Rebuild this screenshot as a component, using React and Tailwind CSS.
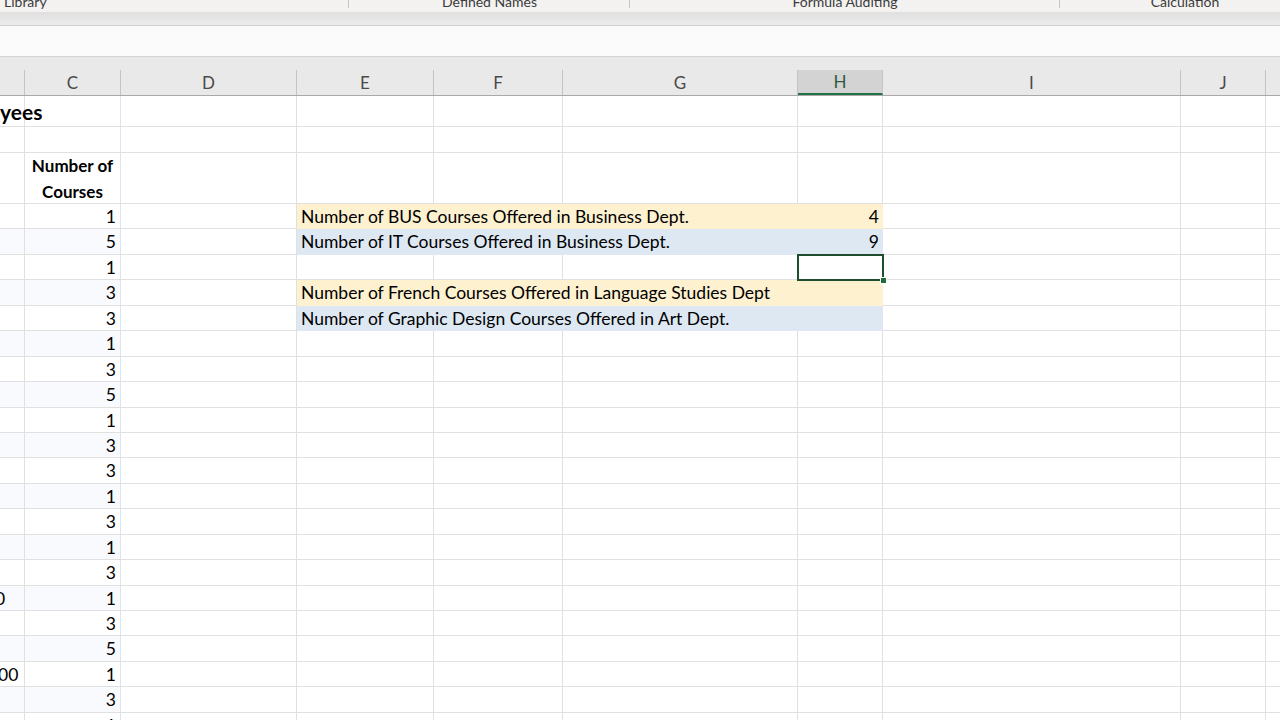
import React from "react";

const FONT = { fontFamily: "Lato, 'Open Sans', 'Liberation Sans', sans-serif" };

const cols = [
  { key: "B", w: 25 },
  { key: "C", w: 96 },
  { key: "D", w: 176 },
  { key: "E", w: 137 },
  { key: "F", w: 129 },
  { key: "G", w: 235 },
  { key: "H", w: 85 },
  { key: "I", w: 298 },
  { key: "J", w: 85 },
  { key: "K", w: 40 },
];

const values = [1, 5, 1, 3, 3, 1, 3, 5, 1, 3, 3, 1, 3, 1, 3, 1, 3, 5, 1, 3, 1];

const bands = {
  0: { bg: "bg-[#fdf1d0]", text: "Number of BUS Courses Offered in Business Dept.", num: "4" },
  1: { bg: "bg-[#dde8f3]", text: "Number of IT Courses Offered in Business Dept.", num: "9" },
  3: { bg: "bg-[#fdf1d0]", text: "Number of French Courses Offered in Language Studies Dept", num: "" },
  4: { bg: "bg-[#dde8f3]", text: "Number of Graphic Design Courses Offered in Art Dept.", num: "" },
};

const bText = { 15: { t: "0", ml: "ml-[-5px]" }, 18: { t: "00", ml: "ml-[-2px]" } };

function Cell({ w, className = "", children }) {
  return (
    <div
      className={"shrink-0 border-r border-b border-[#e0e0e0] " + className}
      style={{ width: w }}
    >
      {children}
    </div>
  );
}

function TopStrip() {
  const groups = [
    { w: 349, label: "Library", align: "justify-start pl-[4px]" },
    { w: 281, label: "Defined Names", align: "justify-center" },
    { w: 430, label: "Formula Auditing", align: "justify-center" },
    { w: 250, label: "Calculation", align: "justify-center" },
  ];
  return (
    <div className="h-[12px] bg-[#f3f2f1] flex overflow-hidden">
      {groups.map((g, i) => (
        <div
          key={i}
          className={"shrink-0 flex items-start h-full relative " + g.align}
          style={{ width: g.w }}
        >
          <span className="text-[14px] leading-[14px] text-[#3b3b3b] mt-[-5px] whitespace-nowrap">
            {g.label}
          </span>
          {i < 3 && (
            <div className="absolute right-0 top-0 h-[8px] w-px bg-[#c6c6c6]" />
          )}
        </div>
      ))}
    </div>
  );
}

function Header() {
  return (
    <div className="h-[39px] bg-[#e9e9e9] flex flex-col justify-end">
      <div className="flex h-[26px] border-b border-[#a9a9a9]">
        {cols.map((c) => {
          const sel = c.key === "H";
          return (
            <div
              key={c.key}
              className={
                "shrink-0 flex items-center justify-center text-[17px] border-r " +
                (sel
                  ? "bg-[#d3d3d3] text-[#2d5c40] border-[#c4c4c4] border-b-2 border-b-[#217346]"
                  : "text-[#4a4a4a] border-[#c4c4c4]")
              }
              style={{ width: c.w }}
            >
              {c.key === "B" || c.key === "K" ? "" : c.key}
            </div>
          );
        })}
      </div>
    </div>
  );
}

function DataRow({ i }) {
  const band = bands[i];
  const tint = i % 2 === 1 ? "bg-[#f8fafd]" : "bg-white";
  const b = bText[i];
  const selected = i === 2;
  return (
    <div className="flex h-[25.45px] text-[17.5px] leading-[24px] pt-0 text-black">
      <Cell w={25} className={tint + " overflow-hidden whitespace-nowrap pt-[1px]"}>
        {b && <span className={"block " + b.ml}>{b.t}</span>}
      </Cell>
      <Cell w={96} className={tint + " text-right pr-[4px] pt-[1px] border-r-[#dbe5f1]"}>
        {values[i]}
      </Cell>
      <Cell w={176} />
      {band ? (
        <div
          className={"shrink-0 flex justify-between pl-[4px] pr-[4px] pt-[1px] whitespace-nowrap " + band.bg}
          style={{ width: 586 }}
        >
          <span>{band.text}</span>
          <span>{band.num}</span>
        </div>
      ) : (
        <>
          <Cell w={137} />
          <Cell w={129} />
          <Cell w={235} />
          <Cell w={85} className="relative">
            {selected && (
              <div className="absolute left-[-1px] top-[-1px] w-[87px] h-[27px] border-2 border-[#1f4e2f]">
                <div className="absolute right-[-5px] bottom-[-5px] w-[7px] h-[7px] bg-[#1f6b3a] border border-white" />
              </div>
            )}
          </Cell>
        </>
      )}
      <Cell w={298} />
      <Cell w={85} />
      <Cell w={40} />
    </div>
  );
}

export default function App() {
  return (
    <div className="w-[1280px] h-[720px] overflow-hidden bg-white" style={FONT}>
      <TopStrip />
      <div className="h-[14px] bg-gradient-to-b from-[#e0e0e0] to-[#ebebeb] border-b border-[#cfcfcf]" />
      <div className="h-[31px] bg-[#fbfbfb] border-b border-[#d4d4d4]" />
      <Header />
      {/* Row 1 */}
      <div className="flex h-[31px] text-black">
        <Cell w={25} className="overflow-visible relative">
          <span className="absolute left-0 top-[4px] text-[21px] leading-[24px] font-bold whitespace-nowrap">yees</span>
        </Cell>
        <Cell w={96} className="border-r-[#dbe5f1]" />
        {cols.slice(2).map((c) => (
          <Cell key={c.key} w={c.w} />
        ))}
      </div>
      {/* Row 2 */}
      <div className="flex h-[26px]">
        <Cell w={25} />
        <Cell w={96} className="border-r-[#dbe5f1]" />
        {cols.slice(2).map((c) => (
          <Cell key={c.key} w={c.w} />
        ))}
      </div>
      {/* Row 3 */}
      <div className="flex h-[51px]">
        <Cell w={25} />
        <Cell w={96} className="border-r-[#dbe5f1] text-center font-bold text-[17px] leading-[26px] text-black whitespace-nowrap">
          <div>Number of</div>
          <div>Courses</div>
        </Cell>
        {cols.slice(2).map((c) => (
          <Cell key={c.key} w={c.w} />
        ))}
      </div>
      {values.map((v, i) => (
        <DataRow key={i} i={i} />
      ))}
    </div>
  );
}
